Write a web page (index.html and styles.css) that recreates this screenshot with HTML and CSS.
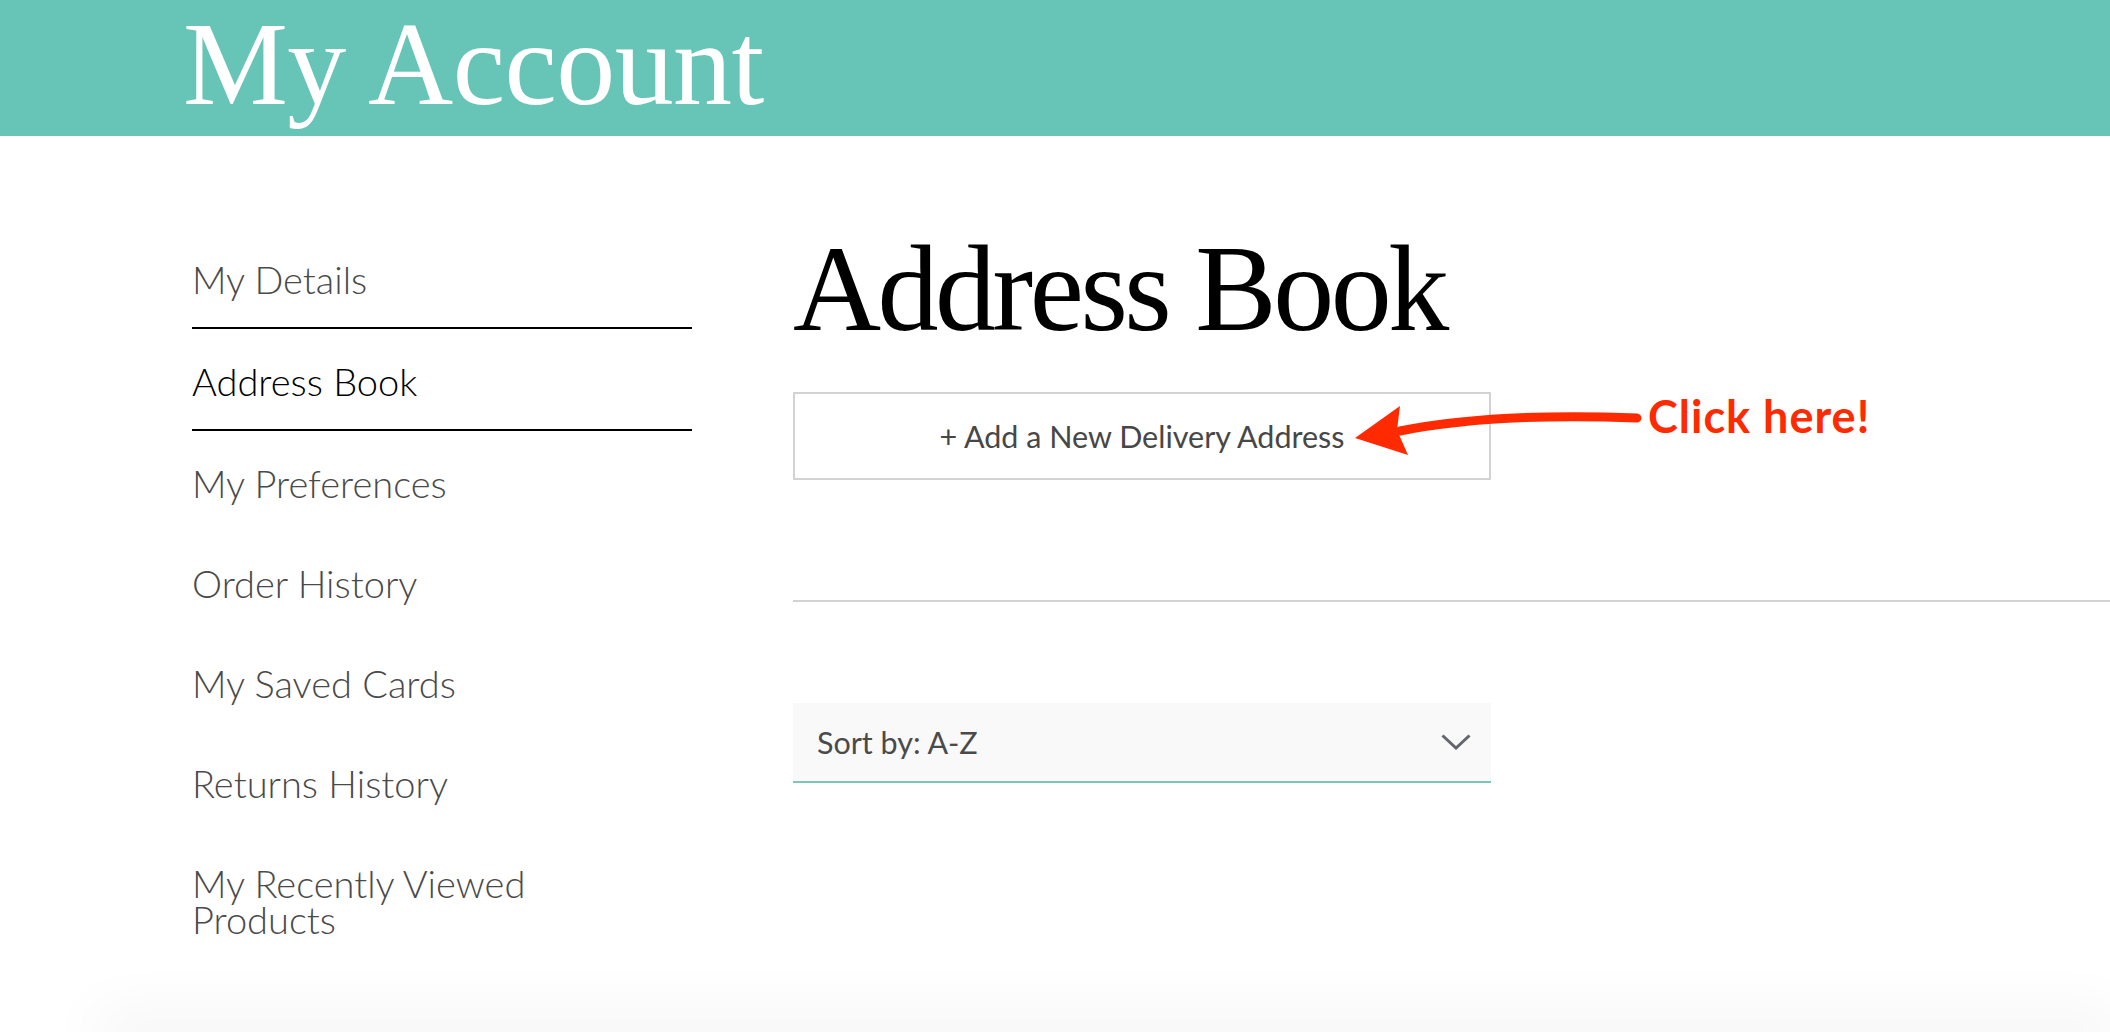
FILE: index.html
```html
<!DOCTYPE html>
<html lang="en">
<head>
<meta charset="utf-8">
<title>My Account - Address Book</title>
<link rel="stylesheet" href="styles.css">
</head>
<body>
<div class="page">
  <header class="banner">
    <h1 class="banner-title">My Account</h1>
  </header>
  <div class="layout">
    <nav class="side-nav">
      <ul class="nav-list">
        <li class="nav-item bordered"><a class="nav-link">My Details</a></li>
        <li class="nav-item bordered"><a class="nav-link active">Address Book</a></li>
        <li class="nav-item"><a class="nav-link">My Preferences</a></li>
        <li class="nav-item"><a class="nav-link">Order History</a></li>
        <li class="nav-item"><a class="nav-link">My Saved Cards</a></li>
        <li class="nav-item"><a class="nav-link">Returns History</a></li>
        <li class="nav-item"><a class="nav-link narrow">My Recently Viewed Products</a></li>
      </ul>
    </nav>
    <main class="content">
      <h2 class="page-title">Address Book</h2>
      <div class="add-row">
        <button class="add-button">+ Add a New Delivery Address</button>
        <svg class="callout-arrow" width="310" height="80" viewBox="0 0 310 80" aria-hidden="true">
          <path d="M294 26 C 217 23, 127 25, 57 39" fill="none" stroke="#ff2a00" stroke-width="9" stroke-linecap="round"/>
          <polygon points="12,46 57,14 54,38 65,63" fill="#ff2a00"/>
        </svg>
        <span class="callout-text">Click here!</span>
      </div>
      <hr class="divider">
      <div class="sort-select">
        <span class="sort-label">Sort by: A-Z</span>
        <svg class="chevron" width="30" height="16" viewBox="0 0 30 16" aria-hidden="true">
          <polyline points="1.5,1.5 15,14 28.5,1.5" fill="none" stroke="#63676b" stroke-width="3"/>
        </svg>
      </div>
    </main>
  </div>
  <div class="footer-edge"></div>
</div>
</body>
</html>
```

FILE: styles.css
```css
html, body {
  margin: 0;
  padding: 0;
  background: #ffffff;
}

.page {
  height: 1032px;
  overflow: hidden;
  display: flex;
  flex-direction: column;
  font-family: "Lato", "Liberation Sans", sans-serif;
}

.banner {
  background: #66c5b6;
  height: 136px;
  flex: none;
  padding-left: 183px;
  box-sizing: border-box;
}

.banner-title {
  margin: 0;
  font-family: "Liberation Serif", "Times New Roman", serif;
  font-weight: normal;
  font-size: 118px;
  line-height: 130px;
  letter-spacing: -0.6px;
  color: #ffffff;
}

.layout {
  display: flex;
  padding-left: 192px;
  padding-top: 91px;
  gap: 101px;
}

.side-nav {
  width: 500px;
  flex: none;
}

.nav-list {
  list-style: none;
  margin: 0;
  padding: 0;
}

.nav-item {
  padding: 34px 0 30px;
}

.nav-item.bordered {
  border-bottom: 2px solid #000000;
}

.nav-link {
  display: block;
  font-size: 38px;
  line-height: 36px;
  color: #4a4a4a;
  font-weight: 300;
}

.nav-link.active {
  color: #000000;
}

.nav-link.narrow {
  max-width: 420px;
}

.content {
  flex: 1;
  min-width: 0;
}

.page-title {
  margin: 1px 0 0;
  font-family: "Liberation Serif", "Times New Roman", serif;
  font-weight: normal;
  font-size: 122px;
  line-height: 122px;
  letter-spacing: -3.5px;
  color: #000000;
}

.add-row {
  position: relative;
  margin-top: 42px;
  height: 88px;
}

.add-button {
  display: block;
  width: 698px;
  height: 88px;
  box-sizing: border-box;
  border: 2px solid #d3d3d3;
  background: #ffffff;
  font-family: "Lato", "Liberation Sans", sans-serif;
  font-size: 30.5px;
  color: #474747;
  padding: 0;
  margin: 0;
}

.callout-arrow {
  position: absolute;
  left: 550px;
  top: 0;
}

.callout-text {
  position: absolute;
  left: 855px;
  top: 2px;
  font-family: "Lato", "Liberation Sans", sans-serif;
  font-weight: bold;
  font-size: 45px;
  line-height: 45px;
  letter-spacing: 1px;
  color: #ff2a00;
  white-space: nowrap;
}

.divider {
  margin: 120px 0 0;
  border: 0;
  border-top: 2px solid #d3d3d3;
  height: 0;
}

.sort-select {
  margin-top: 101px;
  width: 698px;
  height: 80px;
  box-sizing: border-box;
  background: #f9f9f9;
  border-bottom: 2px solid #7cc6b8;
  display: flex;
  align-items: center;
  justify-content: space-between;
  padding: 0 20px 0 24px;
}

.sort-label {
  font-size: 30.5px;
  color: #4a4a4a;
  font-weight: 400;
}

.chevron {
  display: block;
}

.footer-edge {
  margin-top: auto;
  margin-left: 110px;
  height: 0;
  box-shadow: 0 0 60px 14px rgba(0, 0, 0, 0.07);
}
```
